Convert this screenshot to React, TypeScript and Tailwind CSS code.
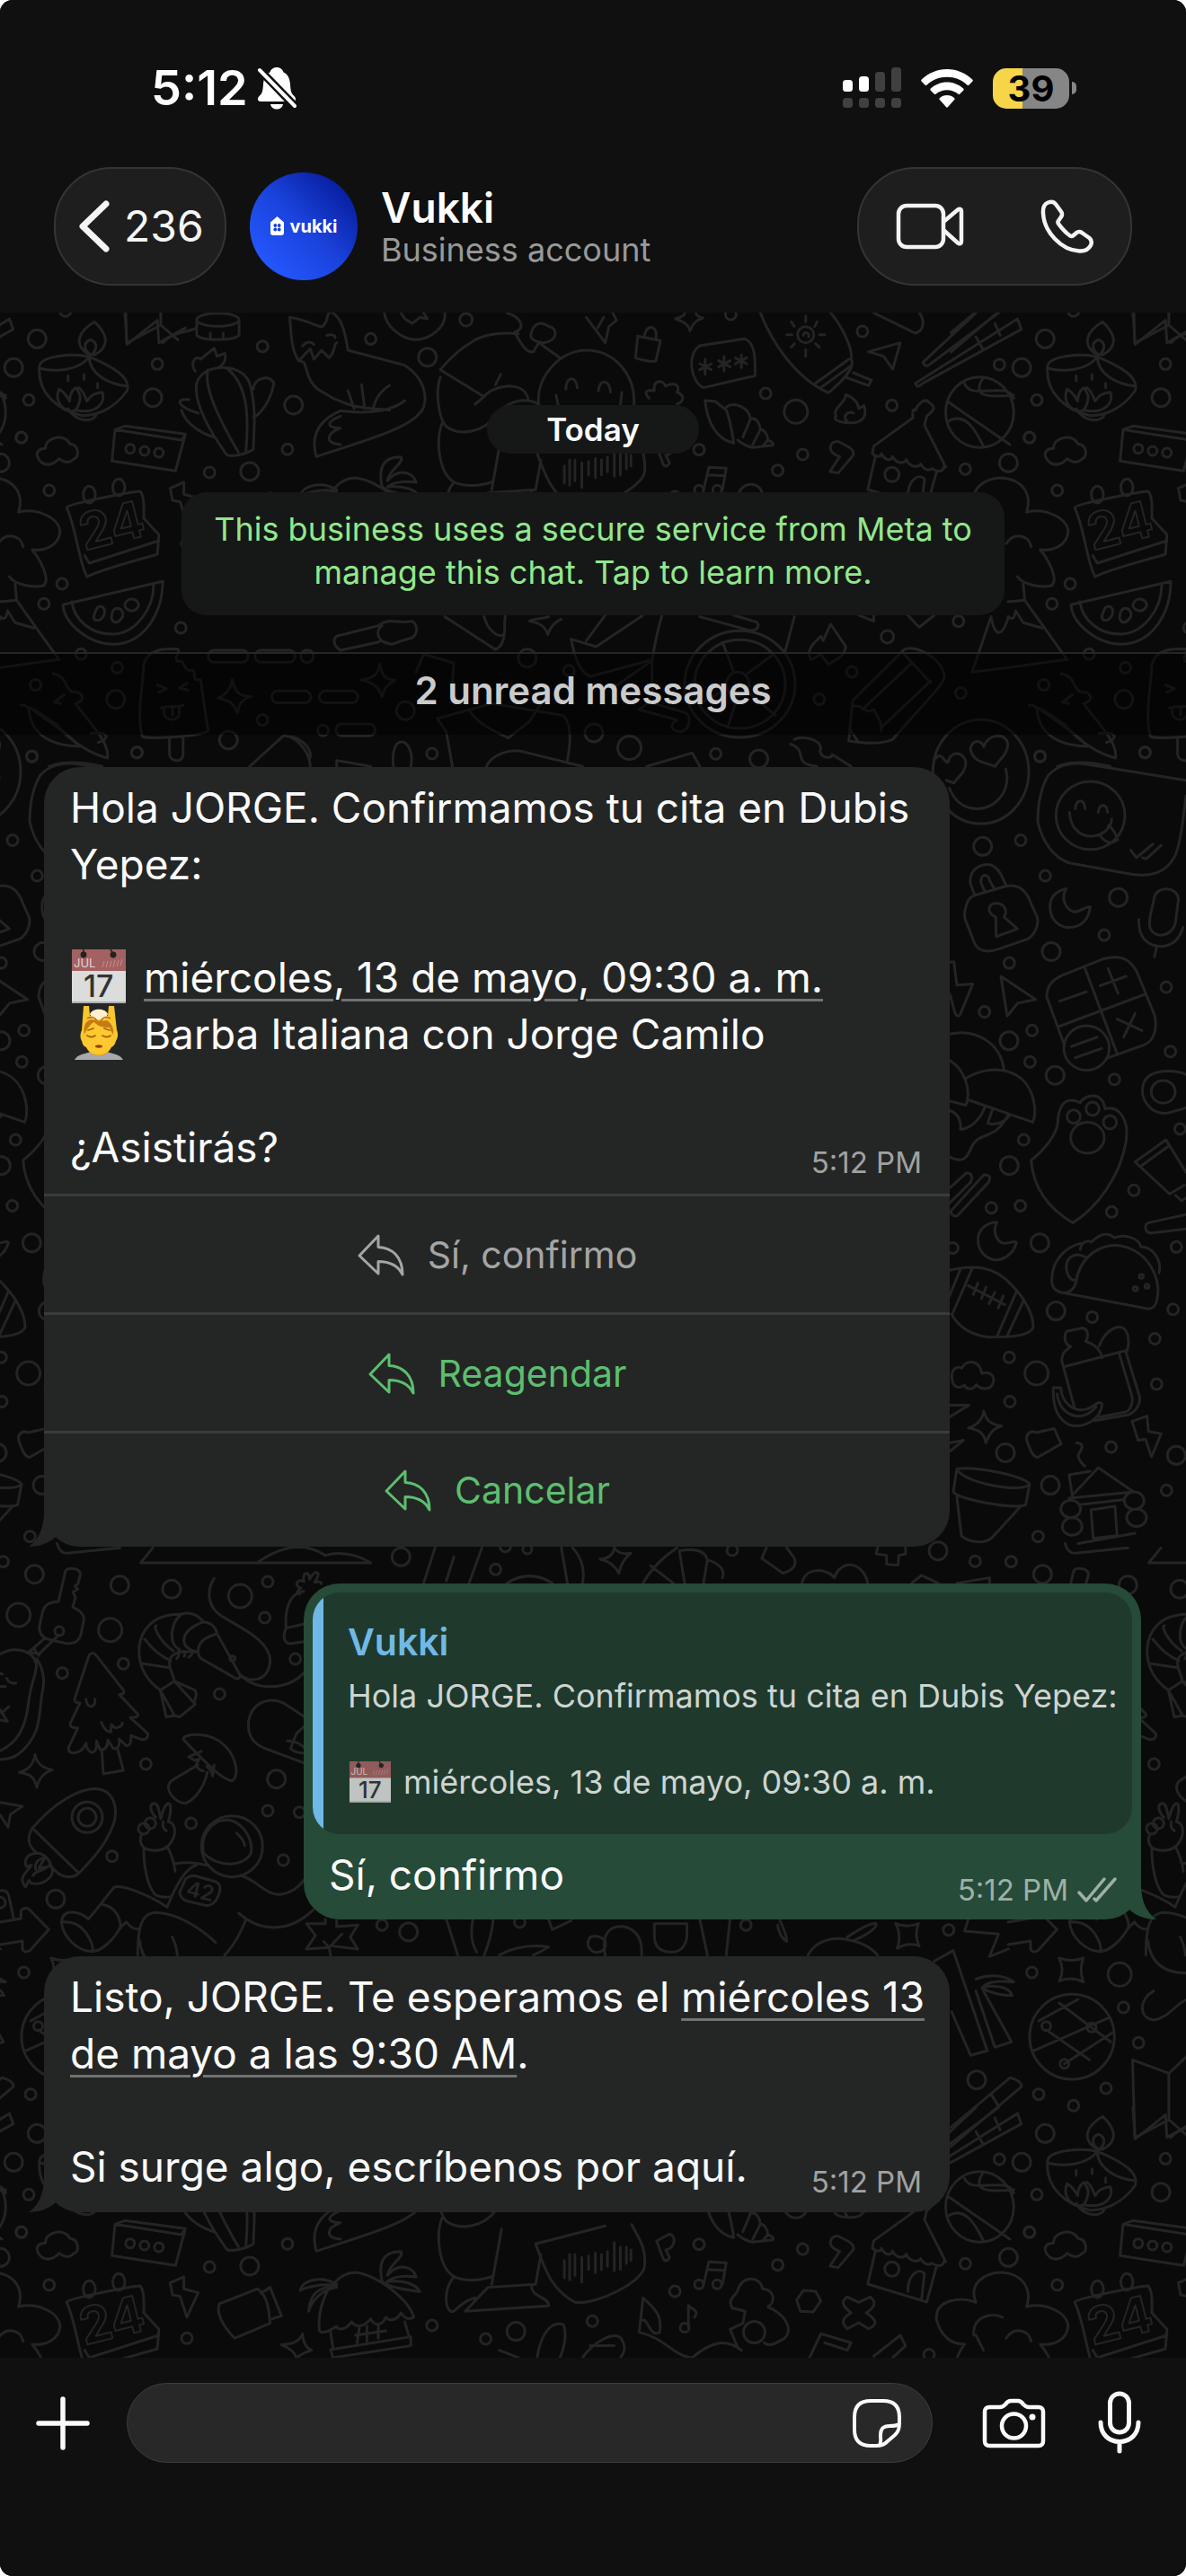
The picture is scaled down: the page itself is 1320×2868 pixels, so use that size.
import React from "react";

type Dot = [number, number, number];

interface Sheet {
  x: number;
  y: number;
  sx: number;
  sy: number;
  dots: Dot[];
  d: string;
}

const e = (cx: number, cy: number, rx: number, ry: number) =>
  `M${cx - rx} ${cy}a${rx} ${ry} 0 1 0 ${2 * rx} 0a${rx} ${ry} 0 1 0 ${-2 * rx} 0`;

/* Wallpaper doodles, grouped by region; each sheet has its own drawing grid. */
const SHEETS: Sheet[] = [
  {
    x: 0, y: 340, sx: 0.842, sy: 0.3333,
    dots: [
      [49, 112, 10], [18, 208, 10], [38, 316, 6], [208, 196, 6], [202, 308, 10], [28, 441, 6], [277, 558, 6],
      [330, 555, 10], [380, 481, 6], [388, 333, 10], [347, 137, 6], [490, 112, 6], [565, 173, 10], [616, 48, 7],
      [1140, 87, 6], [1012, 294, 6], [1052, 355, 13], [1179, 334, 6], [1321, 198, 6], [1061, 498, 6],
      [1276, 547, 6], [1333, 526, 10], [1361, 442, 6], [924, 482, 6], [1028, 551, 6], [65, 618, 6], [82, 930, 6],
      [58, 997, 6], [239, 1077, 6], [107, 1165, 6], [155, 1210, 6], [47, 1268, 6], [153, 1316, 10], [347, 1385, 6],
      [302, 1452, 10], [181, 1493, 6], [42, 1507, 6], [697, 1178, 10], [752, 1220, 6], [536, 1354, 10],
      [785, 1428, 10], [832, 1478, 13], [571, 1497, 6], [946, 1498, 6], [1003, 1515, 10], [1126, 1224, 6],
      [1173, 1107, 7], [1267, 1055, 6], [1083, 1316, 6], [1270, 1295, 6], [427, 1420, 6], [966, 30, 6],
      [1179, 565, 8], [172, 479, 5], [191, 486, 5], [210, 492, 5], [406, 1172, 7], [1065, 98, 9],
    ],
    d:
      "M118 165C95 130 105 85 125 55C140 90 148 135 125 165M120 165C108 145 112 120 120 115C130 125 128 150 120 168" +
      "M52 210C50 165 100 160 118 172C160 215 172 250 168 285C150 350 125 370 108 368C75 350 50 290 52 210M52 210C75 225 105 215 118 172M118 172C118 230 145 265 168 270M90 345C100 390 125 395 128 360" +
      "M78 280C70 330 90 365 100 350C110 310 105 290 100 275C92 290 92 310 92 320C88 300 82 285 78 280M100 350C130 365 140 320 135 290C120 295 118 310 115 320C112 300 108 280 104 275" +
      "M90 235V252M111 230V247M129 260V275" +
      "M165 25L168 130L208 50L210 125L245 75M215 125C230 85 250 90 260 75" +
      e(288, 48, 28, 22) + "M260 50V100C268 120 310 118 316 100V50M278 92V108M295 92V108" +
      "M383 40C385 100 385 150 395 185L402 190C408 240 410 260 420 280L440 310L455 325C470 345 500 345 515 350M460 150L535 200C560 240 565 300 560 340C550 400 500 440 418 505C412 450 415 390 450 352C490 365 520 350 535 318M383 40C400 45 420 70 425 72C435 60 430 30 437 20C450 40 455 70 460 150M395 185L410 145L415 180L425 150L435 175C445 150 440 130 445 125M400 135C405 120 412 120 415 130M432 100C440 95 443 100 443 108M460 285L468 345M478 265L482 345M515 268C500 290 495 320 493 350M450 370C430 390 432 410 450 410C430 430 430 460 450 465" +
      "M300 500C280 430 255 330 260 260C268 190 320 190 330 260C340 350 335 420 335 480C325 500 305 505 300 500M275 215C270 260 280 340 315 490M300 210C325 260 330 350 325 490M335 280C335 240 358 230 362 260C358 320 345 360 335 375M262 360C235 340 230 310 250 315M240 350C245 400 270 430 282 440M258 220C250 190 260 165 265 180L283 143L287 170L297 160C300 180 295 200 290 205" +
      "M152 415L165 403L245 430L232 553L148 520ZM152 415L240 450L245 430" +
      "M55 525C45 500 48 480 60 478C60 435 88 430 92 462C105 465 105 510 98 512C92 530 85 525 78 512C70 535 60 535 55 525Z" +
      "M508 25C510 70 530 110 548 115C570 115 590 70 588 25M530 25L535 45L545 60L555 40L565 45L560 25" +
      "M670 25C690 40 695 80 680 90C690 130 695 160 705 155L712 125M702 95C705 60 715 50 725 70C738 75 738 120 718 125C705 120 700 110 702 95M685 95C665 90 640 95 625 120C605 150 590 190 582 215L640 305C650 270 690 245 698 310M582 240C575 290 580 380 590 405C610 440 640 420 655 370C665 330 690 300 712 330M585 390C575 450 580 560 600 590C615 610 640 600 650 590M715 130L740 175M640 305L628 330M662 230L655 265" +
      "M712 330C708 240 740 150 775 150C815 150 840 240 838 330M748 280C748 235 762 235 763 275M791 285C792 245 806 245 807 290M735 300L738 335M822 290L820 335" +
      "M775 40L800 125L805 70L815 50L810 25M790 75L798 40" +
      "M852 105C852 65 870 60 867 110M843 103L873 118L867 185C862 192 845 180 840 175Z" +
      "M925 135C950 125 975 115 985 112C1000 125 998 200 998 235L930 275C912 255 908 160 925 135ZM925 195L940 215M932 180V230M925 215L940 195M950 185L965 205M957 170V218M950 205L965 185M972 175L987 195M980 165V208M972 195L987 175" +
      "M905 25C905 40 895 42 893 45C905 55 910 65 912 85C916 60 920 50 929 42C922 38 920 30 920 25" +
      "M1005 25C1020 120 1050 240 1095 292C1120 240 1130 200 1125 180C1128 140 1110 60 1098 25M1078 260L1122 180M1085 275L1126 200M1128 225L1152 250L1148 268L1118 240" +
      "M1065 35V55M1065 148V170M1040 98H1047M1083 98H1090M1046 55L1050 70M1080 55L1077 70M1046 140L1050 128M1083 140L1078 128M1062 100C1062 85 1070 90 1069 105" +
      "M1148 155L1190 125L1180 213L1168 170ZM1155 25L1210 93C1225 80 1220 40 1215 25" +
      "M1220 190L1290 25M1220 190C1222 205 1226 205 1230 195L1320 25M1210 260L1345 45M1210 260C1212 275 1215 272 1220 260L1350 80L1345 45M1290 105L1300 150M1315 60L1322 100" +
      e(1295, 357, 45, 118) + "M1252 320L1335 465M1300 240C1285 300 1300 310 1340 300M1275 262C1285 320 1330 250 1340 310M1255 385C1280 350 1295 450 1300 470" +
      "M1105 370C1100 340 1118 330 1118 298C1130 310 1135 330 1135 345L1142 335C1148 380 1135 395 1122 392C1110 392 1100 380 1105 370M1120 388C1112 370 1122 350 1128 360" +
      "M932 318C935 400 950 450 970 460C968 430 965 380 960 350L945 320ZM960 340C970 320 990 340 992 380C1000 370 1005 400 1005 415C1012 415 1015 440 1015 450C1025 460 1023 470 1018 468L995 475C985 470 980 460 975 450M992 380L982 440M1005 415L995 465M1015 450L1008 470" +
      "M858 310C850 290 855 280 865 285C863 250 875 245 880 270C890 255 900 265 895 290C905 300 905 320 895 330" +
      "M1207 375C1205 350 1208 345 1210 350C1215 320 1225 310 1228 325C1238 340 1235 350 1225 370L1222 400L1250 540M1207 375L1155 470L1153 495C1160 510 1165 505 1165 495C1170 520 1178 520 1180 505C1185 530 1195 530 1198 515C1203 545 1215 540 1217 530C1222 555 1230 550 1232 545C1240 560 1248 555 1248 535M1157 505L1147 615L1225 675L1238 555M1200 640C1200 580 1215 560 1222 580L1218 670" +
      "M1097 555L1110 505C1090 490 1098 450 1108 455C1120 470 1130 480 1128 500L1108 560Z" +
      "M83 1000L215 922C215 1030 190 1130 150 1132C115 1130 85 1060 83 1000ZM95 990C98 1050 120 1100 150 1098C180 1095 203 1010 203 935M125 1030C130 990 140 1005 138 1030C135 1060 120 1060 125 1030M148 1030C150 1000 165 1010 162 1040C155 1070 145 1060 148 1030M165 1000C168 970 185 980 183 1005C178 1030 165 1020 165 1000" +
      "M20 930L22 985L0 990M22 985L78 1183L0 1210M0 1040C5 1050 8 1050 10 1020L20 1060L45 1078M1333 1210L1285 1225L1310 1040C1315 1110 1325 1110 1333 1040" +
      "M445 1105L500 1070C515 1040 525 1065 545 1055C555 1075 550 1100 545 1110C530 1120 525 1125 518 1132C505 1125 505 1115 500 1125L450 1152C440 1135 440 1115 445 1105ZM505 1070C495 1090 500 1120 512 1130" +
      "M725 1040C720 1045 700 1050 700 1055C715 1060 722 1080 724 1100C728 1070 735 1055 742 1048M588 1040L655 1150C672 1130 665 1060 668 1038M640 1040C645 1090 660 1110 665 1100" +
      "M788 1140L755 1115C760 1180 765 1220 780 1240L860 1185M788 1140L850 1035M775 1120L800 1035M875 1035C870 1080 865 1130 862 1190V1290M860 1190L815 1270" +
      e(978, 1265, 73, 178) + e(978, 1265, 60, 148) + e(975, 1265, 15, 40) +
      "M955 1125L970 1225M1020 1170L985 1235M975 1305L962 1410M988 1290L1025 1370M962 1280L925 1330" +
      "M1098 1065L1110 1110L1118 1140C1115 1180 1105 1180 1095 1200L1085 1165L1072 1185C1065 1150 1075 1130 1085 1105L1088 1120ZM925 1040L990 1085C1005 1090 1003 1060 1000 1058L970 1035M1050 1040L1038 1155M1135 1035L1155 1055V1035M1200 1035L1215 1075L1235 1035" +
      "M1127 1320L1195 1150C1210 1130 1245 1180 1248 1235C1250 1260 1235 1290 1180 1450C1160 1470 1135 1460 1122 1455ZM1195 1165L1230 1260M1140 1350L1205 1195M1165 1410L1230 1255M1127 1340C1145 1330 1140 1370 1155 1350C1160 1380 1165 1380 1165 1420M1122 1410L1135 1460" +
      "M188 1440C180 1370 190 1250 190 1200C195 1150 215 1145 235 1148C240 1160 228 1175 235 1190C245 1180 240 1210 250 1220C260 1210 255 1235 258 1250H265L275 1420C270 1440 200 1450 188 1440ZM224 1447V1500C225 1525 242 1530 242 1500V1443M208 1268L220 1280L210 1292M247 1262L237 1278L248 1285M213 1345C225 1335 235 1345 242 1335M217 1345V1365C220 1390 237 1390 237 1360V1340M228 1345V1370" +
      "M283 1152H320A8 20 0 0 1 320 1192H283A8 20 0 0 1 283 1152ZM345 1152H382A8 20 0 0 1 382 1192H345A8 20 0 0 1 345 1152ZM367 1288H403A8 20 0 0 1 403 1328H367A8 20 0 0 1 367 1288ZM430 1288H465A8 20 0 0 1 465 1328H430A8 20 0 0 1 430 1288ZM452 1398H488A8 20 0 0 1 488 1438H452A8 20 0 0 1 452 1398Z" +
      "M307 1250C310 1295 318 1305 332 1307C318 1315 315 1340 314 1360C308 1330 305 1320 288 1312C300 1300 305 1280 307 1250ZM502 1197C505 1240 510 1250 522 1252C512 1265 508 1280 505 1307C500 1275 495 1262 478 1252C495 1245 500 1230 502 1197Z" +
      "M550 1225L560 1165L600 1195L598 1260" +
      "M70 1230C90 1240 85 1280 95 1290C110 1290 115 1320 100 1330C120 1400 145 1460 142 1512C120 1500 90 1450 75 1400C60 1380 50 1350 38 1345C30 1330 30 1335 28 1335M80 1330L72 1325L85 1300M38 1345C40 1420 60 1470 105 1473C90 1430 70 1400 45 1355M120 1430C145 1420 145 1450 130 1460" +
      "M578 1380L650 1330L745 1370C755 1400 755 1450 750 1520M578 1380L590 1425L598 1540M620 1350C630 1400 660 1430 672 1445L700 1390L715 1330" +
      "M1050 1450C1060 1435 1085 1450 1085 1480C1080 1510 1100 1520 1100 1500L1125 1540M1045 1465C1070 1490 1045 1530 1080 1540" +
      "M330 1540L375 1437C395 1440 410 1500 410 1540M385 1440C400 1450 412 1480 410 1510M445 1540V1520L490 1540M520 1540C518 1490 522 1450 535 1460C545 1480 545 1520 543 1540M643 1540C650 1500 675 1480 690 1490L770 1540M855 1540L915 1495L925 1540M65 1540C85 1520 110 1525 135 1540" +
      "M845 1350L895 1385C885 1400 885 1420 900 1425C912 1415 915 1370 905 1360L858 1325Z",
  },
  {
    x: 0, y: 2150, sx: 0.842, sy: 0.3333,
    dots: [
      [924, 1180, 5], [948, 1180, 5], [905, 1325, 5], [997, 1340, 12], [571, 1317, 6], [682, 1337, 10],
      [642, 1362, 6], [783, 1303, 6], [892, 1203, 6], [1228, 1415, 6], [247, 1360, 6], [1383, 317, 5],
      [1443, 322, 5], [1407, 443, 5], [1291, 497, 10], [1373, 545, 6], [1419, 583, 6], [1462, 525, 6],
      [1505, 373, 6], [1485, 255, 6], [1480, 145, 13], [1364, 138, 6], [600, 1465, 10],
    ],
    d:
      "M708 1045L800 985M708 1045C720 1130 730 1200 760 1240C790 1250 850 1170 852 1120C855 1050 840 1010 835 980M746 1100V1158M753 1080V1165M760 1080V1150M769 1090V1172M778 1085V1130M787 1075V1140M795 1080V1130M803 1070V1120M812 1040V1135M820 1055V1130M828 1055V1110M834 1065V1100" +
      "M650 1180L663 995M600 1155C585 1200 588 1280 600 1270C612 1240 620 1230 628 1225M715 1080L708 1180L645 1190L615 1270L725 1252C728 1225 700 1220 703 1185" +
      "M868 1035L885 1012C895 1020 892 1060 880 1065L885 1090C882 1105 878 1105 876 1090Z" +
      "M930 1180L937 1105L960 1108L955 1180M935 1130L958 1133M910 1325V1250C915 1265 925 1265 918 1290" +
      "M1062 1200L1078 1203L1085 1235L1075 1272L1058 1270L1053 1232Z" +
      "M1120 1222L1135 1240L1150 1222C1160 1240 1155 1260 1145 1275C1160 1300 1160 1315 1148 1328L1135 1308L1120 1328C1112 1310 1112 1295 1125 1275C1112 1250 1112 1235 1120 1222Z" +
      "M968 1260C960 1225 975 1215 975 1200C980 1150 1005 1150 1008 1195C1025 1200 1025 1240 1015 1255C1045 1290 1050 1350 1030 1370C1020 1385 1015 1385 1010 1375M970 1260L985 1270L982 1310L965 1330L975 1390" +
      "M850 1225C870 1270 875 1290 872 1340C860 1360 855 1290 850 1300M850 1225L845 1340C880 1360 890 1420 915 1425C940 1370 960 1360 980 1400" +
      "M470 1140C500 1150 540 1230 547 1290C540 1300 535 1295 530 1275C525 1300 515 1305 510 1290C505 1320 495 1320 490 1295C480 1325 470 1325 465 1305C455 1340 445 1330 445 1320C430 1345 422 1345 422 1330C420 1270 430 1200 440 1180C450 1150 460 1140 470 1140M445 1190C420 1200 410 1250 408 1270C410 1210 420 1190 445 1185C425 1175 405 1190 397 1200C400 1165 425 1150 445 1180M505 1170C500 1110 505 1070 530 1070C535 1090 515 1110 512 1150C525 1110 545 1115 550 1155C535 1150 520 1155 512 1170C535 1165 550 1180 555 1205C530 1195 515 1190 505 1170" +
      "M437 1340L440 1390M535 1305L540 1350M437 1398L543 1355V1385L440 1425ZM475 1325L472 1375M485 1320V1370M500 1315V1360M470 1350L510 1335" +
      "M225 1175L243 1155V1195L262 1208L247 1290L238 1220L228 1215Z" +
      "M290 1245L340 1195C350 1210 355 1240 357 1310L310 1360C295 1320 285 1280 290 1245ZM345 1210L357 1190L372 1285L360 1295" +
      "M88 1240C90 1225 180 1185 185 1185C192 1200 190 1260 190 1275L210 1330L208 1395C190 1410 140 1440 115 1470C105 1430 100 1300 88 1240M112 1400L118 1425L210 1350" +
      e(118, 1196, 8, 28) + e(157, 1172, 8, 28) +
      "M1238 1300C1235 1230 1270 1220 1290 1240C1280 1180 1300 1140 1325 1140C1350 1145 1365 1190 1357 1255C1380 1240 1410 1270 1412 1320C1410 1370 1390 1385 1375 1380C1385 1410 1400 1480 1390 1500C1370 1510 1350 1490 1345 1470M1238 1300C1245 1360 1260 1380 1275 1380C1260 1430 1260 1480 1280 1490M1287 1350C1285 1290 1310 1270 1325 1290M1330 1360C1340 1320 1360 1330 1363 1370M1290 1350L1300 1400" +
      "M400 1345C395 1375 385 1380 372 1382C385 1395 390 1410 392 1425C400 1410 405 1405 412 1400C402 1390 400 1360 400 1345" +
      "M660 1400L685 1425M710 1425C715 1340 730 1300 745 1315C750 1350 745 1400 740 1425M770 1425C785 1370 815 1330 822 1365C828 1390 825 1410 820 1425M780 1385H812M1070 1425L1085 1345L1125 1375L1120 1400L1090 1375M1155 1420L1190 1350L1197 1385L1180 1425" +
      e(1417, 353, 56, 142) + "M1373 300L1425 228M1366 400L1465 290M1383 330L1440 430M1400 240L1468 370M1407 443L1470 340" +
      "M1497 430L1545 475L1568 420M1497 430L1500 690L1545 630L1568 680M1545 475V630" +
      "M1235 100L1260 65L1305 400L1283 415L1258 270M1290 160C1310 140 1330 150 1340 170C1320 165 1305 170 1300 185C1325 180 1335 195 1338 215C1320 215 1305 200 1298 190M1300 200L1337 370L1315 388L1290 200" +
      "M1517 30C1520 100 1535 140 1568 140M1525 200C1505 230 1505 290 1525 297C1545 290 1555 240 1568 230M1400 90Q1416 105 1432 90Q1426 130 1432 170Q1416 150 1400 167Q1408 130 1400 90Z" +
      "M1257 655L1335 490C1345 495 1352 510 1350 520L1257 720M1310 545L1320 585",
  },
  {
    x: 1040, y: 800, sx: 0.3333, sy: 0.574,
    dots: [
      [161, 248, 10], [288, 236, 6], [370, 305, 6], [353, 73, 6], [703, 66, 6], [614, 347, 10], [567, 420, 6],
      [390, 452, 10], [250, 474, 6], [167, 569, 6], [249, 625, 10], [326, 605, 6], [319, 666, 6], [403, 692, 10],
      [601, 700, 6], [774, 521, 6], [788, 646, 6], [298, 817, 6], [250, 867, 10], [666, 915, 6], [820, 796, 6],
      [592, 957, 6], [190, 949, 6], [287, 945, 6], [352, 1017, 10], [61, 1027, 6], [808, 1025, 6], [797, 1146, 6],
      [406, 1149, 10], [527, 1161, 6], [250, 1239, 6], [341, 1270, 13], [736, 1203, 6], [742, 1291, 6],
      [252, 1325, 6], [237, 1424, 10], [590, 1413, 6], [387, 1487, 10], [808, 1429, 10], [775, 1497, 6],
    ],
    d:
      e(155, 103, 160, 101) + "M120 60C125 40 155 40 165 55C175 30 240 25 245 50C245 70 215 80 202 93C170 85 130 85 120 60M0 80C25 60 30 85 45 85C55 60 100 65 105 85C105 105 75 115 65 125L40 120M50 135C80 180 150 180 190 168C240 150 250 120 238 98" +
      "M840 120L500 88C460 85 410 90 380 110C360 130 345 160 345 200C360 240 400 270 450 280L640 300C720 310 770 300 800 270C820 250 830 200 840 150" +
      e(521, 188, 115, 66) + "M470 175C475 155 500 155 503 175M547 182C550 165 575 163 578 182M451 182C455 220 500 230 530 228C570 225 590 210 592 195M555 228C570 240 590 245 612 235C600 215 590 210 580 208M655 255L675 270L730 243M695 270L708 272L757 246" +
      "M103 370C110 350 120 345 140 342L240 325C290 320 310 340 320 355L343 385C350 400 335 420 310 428L210 448C170 455 140 450 130 430L103 390Q98 380 103 370ZM135 343L120 320C115 290 160 280 190 284C215 290 225 305 240 325M168 335L155 318C155 300 180 300 185 315L200 330M205 385C170 375 180 358 210 358C245 362 240 380 232 385L277 408L206 423Z" +
      "M440 330C420 350 440 370 465 375C490 375 500 365 520 365C515 395 480 407 440 405C400 400 380 380 388 355C395 340 420 332 440 330Z" +
      "M720 385L735 345C745 325 810 325 815 350L805 395C795 425 725 430 718 400ZM683 390C680 430 720 442 760 442C800 440 820 425 830 405M742 443L735 462" +
      "M435 635L375 540C375 515 400 505 430 497L560 467C620 457 650 465 675 490L735 575C745 600 735 625 700 633L580 658M503 485L610 650M412 598L702 535M418 548L507 530M553 518L640 500M580 485L613 533M610 583L693 605M670 572L632 618" + e(508, 639, 76, 43) + "M457 636L543 618M470 658L558 640" +
      "M222 500L338 545L278 552L243 577ZM50 472H65L75 517L128 515L85 575Q75 580 68 570L52 535" +
      "M50 612C140 600 220 630 232 680M50 663C100 680 125 720 105 750L50 742M105 698C180 670 320 670 335 755Q336 775 328 783L115 740M50 760C75 765 90 775 87 797C120 795 150 780 168 755M193 760L178 785C210 790 240 780 250 770M50 850C100 865 110 850 125 830C150 800 200 820 245 770" +
      "M323 857C380 830 415 800 413 775C420 740 450 735 487 745C500 730 560 720 570 757C620 750 650 780 640 820C620 890 540 950 462 978C380 950 330 910 323 857Z" + e(465, 772, 22, 13) + e(528, 757, 22, 13) + e(586, 783, 22, 13) + e(511, 813, 56, 30) +
      e(764, 724, 40, 22) + "M840 690C800 680 720 680 700 705C680 735 720 770 780 765L840 755M840 880L773 817L670 860L785 922L835 905M690 868L785 828M805 925L825 935L840 930" +
      "M52 910L105 882C125 880 130 890 120 900L50 940M55 955L165 885C185 885 190 890 180 900L75 965C60 965 55 962 55 955M840 962L715 978C700 980 700 998 725 998L840 990" +
      "M208 977C190 1000 215 1018 235 1018C255 1018 265 1012 274 1016C265 1040 225 1052 200 1050C160 1045 140 1025 147 1003C155 985 185 977 208 977Z" +
      "M50 1070C130 1060 200 1060 260 1100C310 1130 330 1160 330 1180C320 1200 230 1200 180 1200C120 1195 80 1180 57 1155M125 1068L60 1155M87 1068L50 1120M275 1110L210 1197M297 1130L243 1197M113 1100L235 1137M145 1095L130 1117M173 1103L157 1125M202 1113L182 1135M230 1120L213 1143" +
      "M487 1018C440 1025 390 1050 392 1092C395 1120 470 1125 475 1085C500 1030 580 1015 640 1025C720 1040 760 1090 742 1130Q735 1145 715 1145L440 1115M487 1030C490 1015 510 1012 525 1015C550 1000 580 995 600 1007C630 1000 680 1005 690 1025C730 1025 760 1050 750 1075M440 1065C440 1040 480 1035 505 1045M440 1065C445 1085 460 1090 472 1090" + e(691, 1082, 7, 4) + e(671, 1106, 7, 4) + e(710, 1101, 7, 4) +
      "M60 1285C50 1260 80 1255 92 1260C100 1245 150 1240 158 1270C185 1265 205 1275 195 1290C185 1305 150 1300 140 1292C125 1305 105 1300 100 1293C85 1300 65 1298 60 1285Z" +
      "M467 1335L425 1245C425 1230 440 1225 455 1218L445 1215C430 1205 435 1190 445 1188L495 1182C515 1185 515 1200 505 1208C540 1215 555 1225 560 1240M435 1257L645 1225M550 1217C570 1185 630 1165 645 1195C652 1215 645 1225 640 1230L685 1315C690 1330 670 1345 650 1350L535 1362M617 1232L660 1315C665 1330 650 1343 638 1345L550 1355M397 1298H422C425 1330 470 1345 505 1340C540 1335 545 1320 560 1330C555 1360 500 1378 450 1370C405 1358 395 1330 397 1298M410 1310C415 1350 490 1370 540 1335" +
      "M50 1332H115L50 1355M50 1405L97 1400L50 1422M165 1343C172 1362 190 1370 225 1372C195 1378 185 1385 172 1405C165 1385 150 1380 113 1376C145 1370 160 1360 165 1343Z" +
      "M308 1392C315 1385 325 1380 340 1385L400 1377L423 1407L345 1433C325 1433 315 1410 308 1400ZM660 1363L710 1353L715 1383L757 1387L725 1432L705 1398L680 1400ZM475 1405C505 1405 490 1420 480 1428C480 1440 495 1445 502 1450" +
      "M75 1455C150 1450 300 1470 318 1485L305 1525C270 1535 80 1515 63 1500ZM75 1455C85 1480 290 1505 318 1485M75 1510L90 1585C120 1600 170 1600 190 1590L285 1530" +
      "M450 1467L460 1507L547 1453L665 1500L450 1512M450 1467L520 1460M523 1535L603 1528L610 1585L530 1590ZM485 1525L635 1515" + e(455, 1533, 33, 17) + e(667, 1517, 33, 17) + e(675, 1550, 33, 17) + e(460, 1567, 33, 17) + "M480 1600L670 1580",
  },
  {
    x: 0, y: 1700, sx: 0.3333, sy: 0.3333,
    dots: [
      [100, 32, 6], [10, 116, 6], [115, 158, 10], [62, 294, 13], [400, 194, 10], [573, 208, 10], [802, 231, 13],
      [894, 183, 6], [884, 303, 6], [368, 344, 13], [412, 457, 6], [208, 488, 6], [986, 441, 6], [733, 558, 6],
      [487, 792, 6], [923, 842, 10], [894, 948, 6], [1000, 953, 6], [638, 990, 6], [374, 1100, 6], [946, 1113, 6],
      [186, 1243, 10], [198, 348, 5], [291, 970, 17], [291, 970, 10], [480, 1008, 6], [502, 990, 6], [775, 1067, 34],
      [776, 440, 3], [0, 1255, 6],
    ],
    d:
      "M195 250L218 150C222 135 240 138 250 140C268 145 270 155 267 165L260 190L250 198L260 208L243 218L252 235L243 268C270 280 282 295 280 310L270 360C262 390 235 392 215 388L160 375C135 368 130 345 132 330L142 285C148 260 170 250 195 250ZM195 362L130 425L95 418L112 405L130 430M150 372L112 405" +
      "M297 430C305 418 315 420 322 430L412 545Q418 560 398 560L460 625Q465 637 435 637L493 690Q497 712 472 710L437 697Q440 735 420 730L398 708Q402 745 378 740L360 712Q360 745 335 745L322 715Q325 755 305 753Q290 748 287 722Q275 755 240 755Q225 750 230 735L260 672Q230 672 235 655L267 588Q245 588 250 572ZM340 745L345 825L412 813L392 740M287 575Q290 600 305 600Q320 595 317 575M338 652Q350 685 370 685L372 660Q385 675 392 670Q410 665 408 655" +
      "M465 430C460 380 480 330 530 305C570 290 590 292 605 292C640 280 665 300 680 317C710 320 722 340 725 357L802 495Q800 512 785 505L672 440Q660 430 662 410C665 375 700 365 725 357M662 418C600 410 590 350 680 317M600 410C560 390 570 320 605 292M580 415C530 380 510 330 522 330M570 447C510 420 490 380 483 375M567 470L478 457M465 430C470 480 500 520 535 545L582 515C580 490 560 475 567 445Q575 410 662 418M535 545L555 635L583 630L535 545M583 630L600 635L652 592L582 515L650 545Q660 555 650 580M590 440Q600 430 595 415M615 432Q622 425 612 415M630 435Q640 430 642 420" +
      "M715 172C690 210 690 265 740 298C800 335 905 380 902 450C895 520 830 520 802 495C860 550 960 545 1014 488" +
      "M1014 215C970 220 950 270 955 335M1014 325L955 338C945 360 945 390 970 390L1014 383M1000 225Q985 215 1005 205Q985 195 993 185Q1000 175 1015 183Q1010 155 1025 155Q1035 160 1033 175Q1050 145 1062 155Q1065 165 1050 185Q1075 180 1073 190" +
      "M612 710C610 690 700 680 750 730C790 770 800 830 775 848C740 845 690 790 612 710ZM660 795C630 815 590 835 570 850C545 880 590 925 620 923C655 910 685 860 692 820M672 750L630 768L650 780L665 775L655 795Q665 815 680 815M690 800Q705 810 710 832L715 795" +
      "M1014 632L950 590C900 565 840 585 830 650C825 700 850 725 880 738L1014 788M1014 668L990 690L970 740Q985 755 1010 755M960 715Q990 715 1014 735" +
      "M117 760C122 790 140 805 175 812C145 820 130 840 123 870C115 835 100 825 65 820C100 810 113 790 117 760" +
      "M105 1010C180 920 270 870 325 875C380 880 395 940 380 990C355 1060 310 1110 262 1158C240 1175 215 1170 195 1158L165 1130M105 1010C90 1040 95 1070 125 1090M112 1010L262 1155M125 1090C85 1090 80 1120 88 1135L105 1130C85 1160 60 1170 85 1203L97 1180L103 1190C150 1200 185 1165 172 1135C165 1110 145 1090 125 1090M110 1165C115 1150 140 1150 160 1135L130 1140L150 1105C120 1110 115 1130 120 1145" +
      "M0 920L75 933L35 960L27 1003L0 962M0 425C40 400 110 405 122 460C120 500 100 530 95 590C85 670 60 720 0 748M122 440C150 480 150 520 140 560C130 620 140 700 60 760Q40 775 0 777M22 505Q30 525 53 522M0 490L8 492M0 533H18M30 600L5 622M0 610L25 650L0 645" +
      "M520 970C500 950 498 925 515 923C530 925 530 950 537 975C545 940 555 920 567 925C575 950 565 970 562 985C590 990 588 1030 570 1055C555 1080 520 1085 495 1078C470 1070 465 1050 472 1030M545 985Q540 1005 555 1015M480 1075C480 1130 490 1200 520 1230Q540 1240 570 1235M560 1070Q580 1110 585 1150M585 1125Q630 1115 690 1130M655 1130C620 1140 590 1190 558 1270C500 1230 400 1190 380 1205C350 1240 335 1265 295 1310" +
      "M680 1090C665 1020 720 970 770 980C820 995 845 1050 838 1090C815 1135 730 1140 680 1090M790 1023Q815 1045 817 1065M620 1175Q640 1160 660 1168L720 1185Q740 1195 733 1220Q720 1265 690 1265L625 1250Q600 1240 600 1220Z" +
      "M805 1165C860 1180 890 1235 940 1227C980 1220 1000 1200 1014 1180M797 1290C850 1340 950 1370 1045 1280M820 1315Q790 1390 750 1430" +
      "M295 1310C270 1285 210 1270 205 1320C210 1370 260 1420 310 1418C340 1415 380 1380 400 1340L422 1320Q440 1345 462 1343M337 1260Q400 1270 403 1340M205 1320Q260 1315 290 1360Q315 1400 308 1418M460 1430C460 1330 475 1290 520 1288C600 1290 680 1350 720 1388M575 1370Q590 1400 592 1430" +
      "M0 1320L70 1308V1285Q75 1270 95 1275L163 1345L100 1415Q80 1425 75 1410V1383L0 1395M0 1215Q25 1210 30 1235L45 1305" +
      "M190 55Q200 90 225 88L400 70M510 70L470 120H1238",
  },
  {
    x: 0, y: 1320, sx: 0.842, sy: 0.3333,
    dots: [
      [530, 1240, 10], [655, 1282, 6], [1240, 1220, 10], [1289, 1255, 6], [668, 1205, 6], [697, 1215, 5], [968, 1218, 6],
    ],
    d:
      "M340 1260Q390 1170 430 1235Q460 1215 490 1260M575 1210L560 1328M600 1240L590 1320M637 1210L620 1328M742 1210L750 1328M757 1210Q775 1260 770 1328M670 1328Q700 1280 730 1328M793 1248Q810 1245 812 1210Q818 1235 834 1228Q822 1250 818 1295Q810 1255 793 1248M895 1210Q865 1260 850 1328M860 1270L890 1328M898 1220Q930 1205 935 1250L930 1328M898 1220L905 1328M935 1250Q960 1270 955 1310M1013 1210L1007 1245L1035 1295Q1055 1280 1050 1245L1040 1210M1160 1210L1158 1230L1172 1235V1265L1187 1268L1188 1235L1197 1230V1210M1060 1328C1065 1270 1095 1280 1103 1310C1110 1250 1140 1250 1147 1328M1205 1328L1218 1302L1240 1328M1265 1328L1308 1310V1328",
  },
  {
    x: 0, y: 1740, sx: 0.842, sy: 0.3333,
    dots: [[505, 1210, 6], [540, 1233, 10], [687, 1200, 6], [986, 1210, 6], [1254, 1226, 6]],
    d:
      "M430 1190V1205H405L417 1245L405 1290L435 1285L437 1310M445 1190V1215L473 1210L463 1250L473 1290L440 1280M428 1265L435 1285L452 1240M590 1190L605 1310M652 1190Q650 1250 640 1310M625 1190Q620 1260 630 1300M660 1310Q690 1270 725 1283Q715 1300 705 1310M778 1260C780 1240 795 1245 800 1265C802 1290 795 1305 785 1300C778 1290 776 1275 778 1260M800 1310C795 1240 805 1210 825 1215Q850 1230 848 1310M865 1205H908V1250Q905 1300 887 1300Q866 1300 865 1250ZM925 1190L935 1310M965 1190L960 1310M1068 1310Q1080 1255 1110 1255Q1145 1265 1160 1310M1120 1250Q1150 1200 1158 1205Q1160 1225 1130 1260M1030 1190Q1040 1240 1040 1265Q1030 1250 1028 1210M1184 1205Q1198 1220 1214 1205Q1208 1245 1215 1280Q1200 1265 1186 1288Q1192 1245 1184 1205ZM1280 1190L1275 1230L1320 1240L1308 1315L1333 1290M725 1190L730 1225L755 1195",
  },
];

const COPIES: [number, number][] = [-1122, 0, 1122].flatMap((x) =>
  [-1998, 0, 1998].map((y): [number, number] => [x, y]),
);

function Wallpaper() {
  return (
    <svg aria-hidden="true" className="absolute inset-0 h-full w-full" fill="none" stroke="#242424" strokeWidth="3" strokeLinecap="round" strokeLinejoin="round">
      <defs>
        <g id="doodles">
          {SHEETS.map((s, i) => (
            <g key={i}>
              <path d={s.d} vectorEffect="non-scaling-stroke" transform={`translate(${s.x} ${s.y}) scale(${s.sx} ${s.sy})`} />
              {s.dots.map(([cx, cy, r], j) => (
                <circle key={j} cx={s.x + cx * s.sx} cy={s.y + cy * s.sy} r={r} />
              ))}
            </g>
          ))}
          <text x="94" y="2611" fontSize="56" strokeWidth="2" fontFamily="Inter, sans-serif" fontWeight="700" transform="rotate(-14 94 2611)">24</text>
          <text x="206" y="2110" fontSize="24" fill="#242424" stroke="none" fontFamily="Inter, sans-serif" fontWeight="600" transform="rotate(14 206 2110)">42</text>
        </g>
      </defs>
      <g transform="translate(0 -348)">
        {COPIES.map(([x, y]) => (
          <use key={`${x}:${y}`} href="#doodles" x={x} y={y} />
        ))}
      </g>
    </svg>
  );
}

function StatusBar() {
  return (
    <div className="flex h-[52px] items-center justify-between pr-[122px] pl-[168px]">
      <div className="flex items-center gap-[10px]">
        <span className="text-[54px] leading-[52px] font-semibold text-white">5:12</span>
        <svg width="44" height="48" viewBox="0 0 44 48" aria-label="Silent mode">
          <g fill="#fff">
            <path d="M22 1c-4 0-7 2.500-7.500 5.500C9 9 7.500 14 7 20c-.5 7-1 10-4 12.500C1.500 34 1 35 1 36.500 1 38 2 39 4 39h36c2 0 3-1 3-2.500 0-1.500-.5-2.500-2-4-3-2.500-3.500-5.500-4-12.500C36.500 14 35 9 29.500 6.500 29 3.500 26 1 22 1Z" />
            <path d="M15 42h14c-.5 3.500-3.500 5.500-7 5.500S15.500 45.500 15 42Z" />
          </g>
          <path d="M3 4l39 40" stroke="#101010" strokeWidth="9" strokeLinecap="round" />
          <path d="M3 4l39 40" stroke="#fff" strokeWidth="4" strokeLinecap="round" />
        </svg>
      </div>
      <div className="flex items-center">
        <svg width="66" height="46" viewBox="0 0 66 46" aria-label="Signal">
          <g fill="#fff">
            <rect x="0" y="14" width="11" height="13" rx="3.500" />
            <rect x="18" y="10" width="11" height="17" rx="3.500" />
          </g>
          <g fill="#404040">
            <rect x="36" y="5" width="11" height="22" rx="3.500" />
            <rect x="54" y="0" width="11" height="27" rx="3.500" />
            <rect x="0" y="34" width="11" height="11" rx="3.500" />
            <rect x="18" y="34" width="11" height="11" rx="3.500" />
            <rect x="36" y="34" width="11" height="11" rx="3.500" />
            <rect x="54" y="34" width="11" height="11" rx="3.500" />
          </g>
        </svg>
        <svg width="58" height="43" viewBox="0 0 58 43" className="ml-[21px]" fill="#fff" aria-label="Wi-Fi">
          <path d="M29 0C18 0 8 4.500.8 11.500c-.8.8-.8 1.500 0 2.300l3.600 3.700c.7.800 1.500.800 2.300 0C12.500 12 20.400 8.800 29 8.800s16.500 3.200 22.300 8.700c.8.800 1.600.800 2.300 0l3.600-3.700c.8-.8.8-1.500 0-2.300C50 4.500 40 0 29 0Z" />
          <path d="M29 14.500c-7 0-13.400 2.700-18.100 7-.8.8-.8 1.500 0 2.300l3.700 3.700c.7.700 1.500.7 2.200 0C20 24.800 24.300 23.200 29 23.200s9 1.600 12.200 4.300c.7.700 1.500.7 2.200 0l3.700-3.700c.8-.8.8-1.500 0-2.300-4.700-4.300-11.100-7-18.100-7Z" />
          <path d="M29 29c-3.200 0-6 1.200-8 3-.8.7-.8 1.500 0 2.300l6.900 7.800c.7.700 1.500.7 2.200 0l6.900-7.800c.8-.8.8-1.600 0-2.300-2-1.800-4.800-3-8-3Z" />
        </svg>
        <div className="ml-[22px] flex h-[45px] w-[85px] items-center justify-center rounded-[15px] bg-linear-to-r from-[#f7d548] from-39% to-[#868686] to-39% text-[40px] leading-[45px] font-bold text-black">39</div>
        <div className="ml-[3px] h-[14px] w-[5px] rounded-r-full bg-[#868686]" />
      </div>
    </div>
  );
}

function Header() {
  return (
    <header className="flex flex-col bg-[#101010] pt-[72px] pb-[30px]">
      <StatusBar />
      <div className="mt-[62px] flex items-center px-[60px]">
        <button className="flex h-[132px] w-[192px] items-center gap-[15px] rounded-[64px] border-2 border-[#343434] bg-[#1e1e1e] pl-[25px] text-[48px] text-[#f4f5f4]">
          <svg width="36" height="60" viewBox="0 0 36 60" fill="none" stroke="currentColor" strokeWidth="7" strokeLinecap="round" strokeLinejoin="round" aria-label="Back">
            <path d="M31 5L5 30l26 25" />
          </svg>
          236
        </button>
        <div className="ml-[26px] flex size-[120px] items-center justify-center gap-[5px] rounded-full bg-linear-to-tr from-[#2456fb] from-15% via-[#1b43dc] to-[#071a9c] to-90%">
          <svg width="17" height="26" viewBox="0 0 17 26" aria-hidden="true">
            <path d="M8.500 2L16 8.500V20a3 3 0 0 1-3 3H4a3 3 0 0 1-3-3V8.500Z" fill="#fff" />
            <g fill="#1a3fd8">
              <circle cx="6.300" cy="12" r="1.900" />
              <circle cx="10.700" cy="12" r="1.900" />
              <circle cx="6.300" cy="16.500" r="1.900" />
              <circle cx="10.700" cy="16.500" r="1.900" />
            </g>
          </svg>
          <span className="text-[20px] leading-6 font-bold text-white">vukki</span>
        </div>
        <div className="ml-[26px] flex flex-1 flex-col">
          <h1 className="text-[46px] leading-[52px] font-semibold text-white">Vukki</h1>
          <p className="text-[36px] leading-[42px] text-[#999999]">Business account</p>
        </div>
        <div className="flex h-[132px] w-[306px] items-center justify-between rounded-[64px] border-2 border-[#343434] bg-[#1e1e1e] pr-[40px] pl-[41px] text-[#f4f4f4]">
          <button aria-label="Video call">
            <svg width="76" height="54" viewBox="0 0 76 54" fill="none" stroke="currentColor" strokeWidth="4.500" strokeLinejoin="round">
              <rect x="3" y="4" width="50" height="46" rx="9" />
              <path d="M53 22L69 8.500c2-1.500 4-.5 4 1.500v34c0 2-2 3-4 1.500L53 31" />
            </svg>
          </button>
          <button aria-label="Voice call">
            <svg width="60" height="60" viewBox="0 0 60 60" fill="none" stroke="currentColor" strokeWidth="4.500" strokeLinejoin="round">
              <path d="M8.500 3.500C4.500 5 2.500 9 3 15.500 4 36 23 56.500 43 57.500c7 .5 11-2.500 13-6.500 1.300-3 .8-6-1.500-8l-8.500-6c-2-1.300-4-1.200-6 .2l-3.500 3c-1.200 1-2.300 1-3.500.3C28 37 23.500 32 20 27c-.8-1.300-.7-2.500.2-3.500L23 19.500c1.300-1.800 1.400-3.500.3-5.500L17.500 6C15.500 3 12 2.200 8.500 3.500Z" />
            </svg>
          </button>
        </div>
      </div>
    </header>
  );
}

function CalendarEmoji({ className }: { className: string }) {
  return (
    <svg viewBox="0 0 60 60" className={className} role="img" aria-label="Calendar">
      <rect width="60" height="60" fill="#dcdcdc" />
      <rect width="60" height="24" fill="#a46162" />
      <rect y="58" width="60" height="2" fill="#aeb0b0" />
      <g stroke="#222" strokeWidth="1.500" fill="#222">
        <circle cx="13" cy="6" r="2.700" />
        <path d="M13 0v5M43 0l3 5" />
        <circle cx="46" cy="6" r="2.700" />
      </g>
      <g stroke="#c09090" strokeWidth="1">
        <path d="M34 20l2-7M38 20l2-7M42 20l2-7M46 20l2-8M50 19l2-7M54 18l2-7" />
      </g>
      <text x="2" y="20" fontSize="13" fontFamily="Inter, sans-serif" fill="#e6d4d4">JUL</text>
      <text x="13" y="53" fontSize="34" fontFamily="Inter, sans-serif" fontWeight="500" fill="#333">17</text>
    </svg>
  );
}

function MassageEmoji({ className }: { className: string }) {
  return (
    <svg viewBox="0 0 60 60" className={className} role="img" aria-label="Head massage">
      <path d="M3 60c3-6 12-7 18-9h18c6 2 15 3 18 9Z" fill="#a9a9ad" />
      <path d="M19 49h22c0 8-22 8-22 0Z" fill="#d9920f" />
      <path d="M13 0h6l1 11h20l1-11h6l3 27c2 4 1 9-1 12-1 4-3 6-5 7-5 11-23 12-28 0-3-1-4-3-5-7-2-3-2-8 0-12Z" fill="#fac62d" />
      <path d="M20 9c3-7 17-7 20 0l-3 6H23Z" fill="#fff0cf" />
      <path d="M14 32c-2-10 2-17 9-17 4 2 11 2 16 1 6 4 8 10 7 16-2-3-3-5-4-8-8 0-14-2-17-5-6 3-9 7-11 13" fill="#c47b14" />
      <path d="M18 27c2-6 4-8 7-9 4 5 11 7 17 6l2 17c-3 14-27 14-30 0Z" fill="#fdc92f" />
      <path d="M17 14c5-3 9-1 11 3M43 14c-5-3-9-1-11 3" stroke="#c6790e" strokeWidth="2" fill="none" />
      <g fill="none" stroke="#a8620c" strokeWidth="1.800" strokeLinecap="round">
        <path d="M17 33q5 3 9 0M34 33q5 3 9 0M18 27l6-2M36 25l6 2" />
      </g>
      <ellipse cx="30" cy="45" rx="4" ry="1.700" fill="#9b3f0e" />
    </svg>
  );
}

function ReplyIcon() {
  return (
    <svg width="54" height="48" viewBox="0 0 54 48" fill="none" stroke="currentColor" strokeWidth="3" strokeLinejoin="round" aria-hidden="true">
      <path d="M24 3v12.500C40 16 51 27 51 46 46 36 38 31.500 24 31.500V45L3 25Z" />
    </svg>
  );
}

function InTail() {
  return (
    <svg aria-hidden="true" width="40" height="39" viewBox="0 0 40 39" className="absolute bottom-0 -left-[17px]">
      <path d="M17 0C17 20 10 32 0 39c12 0 22-4 29-10l11-9V0Z" fill="#242625" />
    </svg>
  );
}

function Bubble({ children }: { children: React.ReactNode }) {
  return (
    <article className="relative w-full max-w-[1008px] rounded-[40px] bg-[#242625] text-[46px] leading-[63px] text-[#fafafa]">
      {children}
      <InTail />
    </article>
  );
}

function LastLine({ text }: { text: string }) {
  return (
    <div className="flex h-[68px] items-start justify-between">
      <p>{text}</p>
      <time className="self-end text-[33px] leading-10 text-[#a0a1a1]">5:12 PM</time>
    </div>
  );
}

const DATE = "underline decoration-[#717373] decoration-[3px] underline-offset-[7px]";

const REPLIES = [
  { label: "Sí, confirmo", used: true },
  { label: "Reagendar", used: false },
  { label: "Cancelar", used: false },
];

export default function App() {
  return (
    <div className="min-h-screen bg-white font-[Inter,sans-serif]">
      <div className="flex min-h-screen flex-col overflow-hidden rounded-[14px] bg-[#101010]">
        <Header />

        <main className="relative flex flex-1 flex-col overflow-hidden bg-[#0a0a0a] pt-[103px]">
          <Wallpaper />
          <div className="relative flex flex-col">
            <div className="flex h-[54px] w-[236px] items-center justify-center self-center rounded-[27px] bg-[#161817] text-[35px] font-semibold text-[#fafafa]">Today</div>

            <button className="mt-[43px] w-[916px] max-w-full self-center rounded-[28px] bg-[#161817] pt-[17px] pb-6 text-[36px] leading-[48px] text-[#92e88c]">
              This business uses a secure service from Meta to
              <br />
              manage this chat. Tap to learn more.
            </button>

            <div className="mt-[41px] border-t-2 border-[#262626] bg-black/50 pt-4 pb-6 text-center text-[42px] leading-[50px] font-semibold text-[#cbcbcb]">2 unread messages</div>

            <div className="mt-[36px] flex flex-col gap-[41px] pr-[50px] pl-[49px]">
              <Bubble>
                <div className="pt-[14px] pr-[31px] pb-[15px] pl-[29px]">
                  <p>
                    Hola JORGE. Confirmamos tu cita en Dubis
                    <br />
                    Yepez:
                  </p>
                  <p className="mt-[63px]">
                    <CalendarEmoji className="mr-[20px] ml-[2px] inline-block size-[60px] align-[-12px]" />
                    <a href="#cita" className={DATE}>miércoles, 13 de mayo, 09:30 a. m.</a>
                  </p>
                  <p className="mb-[63px]">
                    <MassageEmoji className="mr-[20px] ml-[2px] inline-block size-[60px] align-[-12px]" />
                    Barba Italiana con Jorge Camilo
                  </p>
                  <LastLine text="¿Asistirás?" />
                </div>
                {REPLIES.map((r) => (
                  <button
                    key={r.label}
                    disabled={r.used}
                    className="flex h-[132px] w-full items-center justify-center gap-[25px] border-t-[3px] border-[#3a3c3b] text-[41px] leading-[56px] text-[#5cbf6f] last-of-type:h-[129px] disabled:text-[#a4a5a5]"
                  >
                    <ReplyIcon />
                    {r.label}
                  </button>
                ))}
              </Bubble>

              <article className="relative w-full max-w-[932px] self-end rounded-[40px] bg-[#264b38] p-[10px] pb-[13px] text-[46px] leading-[63px] text-[#fafafa]">
                <blockquote className="flex overflow-hidden rounded-[30px] bg-[#1f3a2d]">
                  <div className="w-3 shrink-0 bg-[#70b9e6]" />
                  <div className="pt-[27px] pb-[34px] pl-[27px]">
                    <p className="text-[41px] leading-[56px] font-semibold text-[#70b9e6]">Vukki</p>
                    <p className="mt-2 text-[36px] leading-[48px] text-[#ced4d1]">Hola JORGE. Confirmamos tu cita en Dubis Yepez:</p>
                    <p className="mt-[48px] flex items-center text-[36px] leading-[48px] text-[#ced4d1]">
                      <CalendarEmoji className="mr-[14px] ml-[2px] size-[46px] opacity-85" />
                      miércoles, 13 de mayo, 09:30 a. m.
                    </p>
                  </div>
                </blockquote>
                <div className="mt-[14px] flex h-[68px] items-start justify-between pr-[17px] pl-[18px]">
                  <p>Sí, confirmo</p>
                  <div className="flex items-center gap-[10px] self-end text-[#9fb0a7]">
                    <time className="text-[33px] leading-10">5:12 PM</time>
                    <svg width="44" height="30" viewBox="0 0 44 30" fill="none" stroke="currentColor" strokeWidth="3.500" strokeLinecap="round" strokeLinejoin="round" aria-label="Delivered">
                      <path d="M2 18l8 9L30 3M19 25l2 2L42 3" />
                    </svg>
                  </div>
                </div>
                <svg aria-hidden="true" width="40" height="39" viewBox="0 0 40 39" className="absolute -right-[17px] bottom-0">
                  <path d="M23 0C23 20 30 32 40 39c-12 0-22-4-29-10L0 20V0Z" fill="#264b38" />
                </svg>
              </article>

              <Bubble>
                <div className="py-[14px] pr-[31px] pl-[29px]">
                  <p className="-mr-5 mb-[63px]">
                    Listo, JORGE. Te esperamos el{" "}
                    <a href="#cita" className={DATE}>miércoles 13 de mayo a las 9:30 AM</a>.
                  </p>
                  <LastLine text="Si surge algo, escríbenos por aquí." />
                </div>
              </Bubble>
            </div>
          </div>
        </main>

        <footer className="flex h-[243px] items-start bg-[#101010] pt-[28px] pr-[50px] pl-[39px] text-[#fafafa]">
          <div className="flex h-[89px] flex-1 items-center">
            <button aria-label="Add attachment">
              <svg width="62" height="62" viewBox="0 0 62 62" fill="none" stroke="currentColor" strokeWidth="5.500" strokeLinecap="round">
                <path d="M31 4v54M4 31h54" />
              </svg>
            </button>
            <div className="ml-[40px] flex h-full flex-1 items-center rounded-full border border-[#3c3c3c] bg-[#282828] pr-[33px] pl-10">
              <input aria-label="Message" className="h-full min-w-0 flex-1 bg-transparent text-[46px] outline-none" />
              <button aria-label="Stickers">
                <svg width="56" height="56" viewBox="0 0 56 56" fill="none" stroke="currentColor" strokeWidth="4" strokeLinejoin="round">
                  <path d="M21 3h14c12 0 18 6 18 18v6c0 7-1 10-5 14l-7 6c-5 5-8 6-14 6h-6C9 53 3 47 3 35V21C3 9 9 3 21 3Z" />
                  <path d="M31 52c2-3 1-7 1-11 0-7 3-10 10-10 4 0 8 0 10-2" />
                </svg>
              </button>
            </div>
            <button aria-label="Camera" className="ml-[55px]">
              <svg width="71" height="56" viewBox="0 0 71 56" fill="none" stroke="currentColor" strokeWidth="4.500" strokeLinejoin="round">
                <path d="M8 10h12c3 0 4-1 6-3 2-3 3-4 6-4h8c3 0 4 1 6 4 2 2 3 3 6 3h11c3 0 5 2 5 5v33c0 3-2 5-5 5H8c-3 0-5-2-5-5V15c0-3 2-5 5-5Z" />
                <circle cx="35.500" cy="31" r="13.500" />
                <circle cx="56" cy="21" r="3.500" fill="currentColor" stroke="none" />
              </svg>
            </button>
            <button aria-label="Record voice message" className="ml-[58px]">
              <svg width="48" height="72" viewBox="0 0 48 72" fill="none" stroke="currentColor" strokeWidth="5" strokeLinecap="round">
                <rect x="13.500" y="3" width="21" height="43" rx="10.500" />
                <path d="M3 35c0 13 9 21.500 21 21.500S45 48 45 35M24 57v10" />
              </svg>
            </button>
          </div>
        </footer>
      </div>
    </div>
  );
}
